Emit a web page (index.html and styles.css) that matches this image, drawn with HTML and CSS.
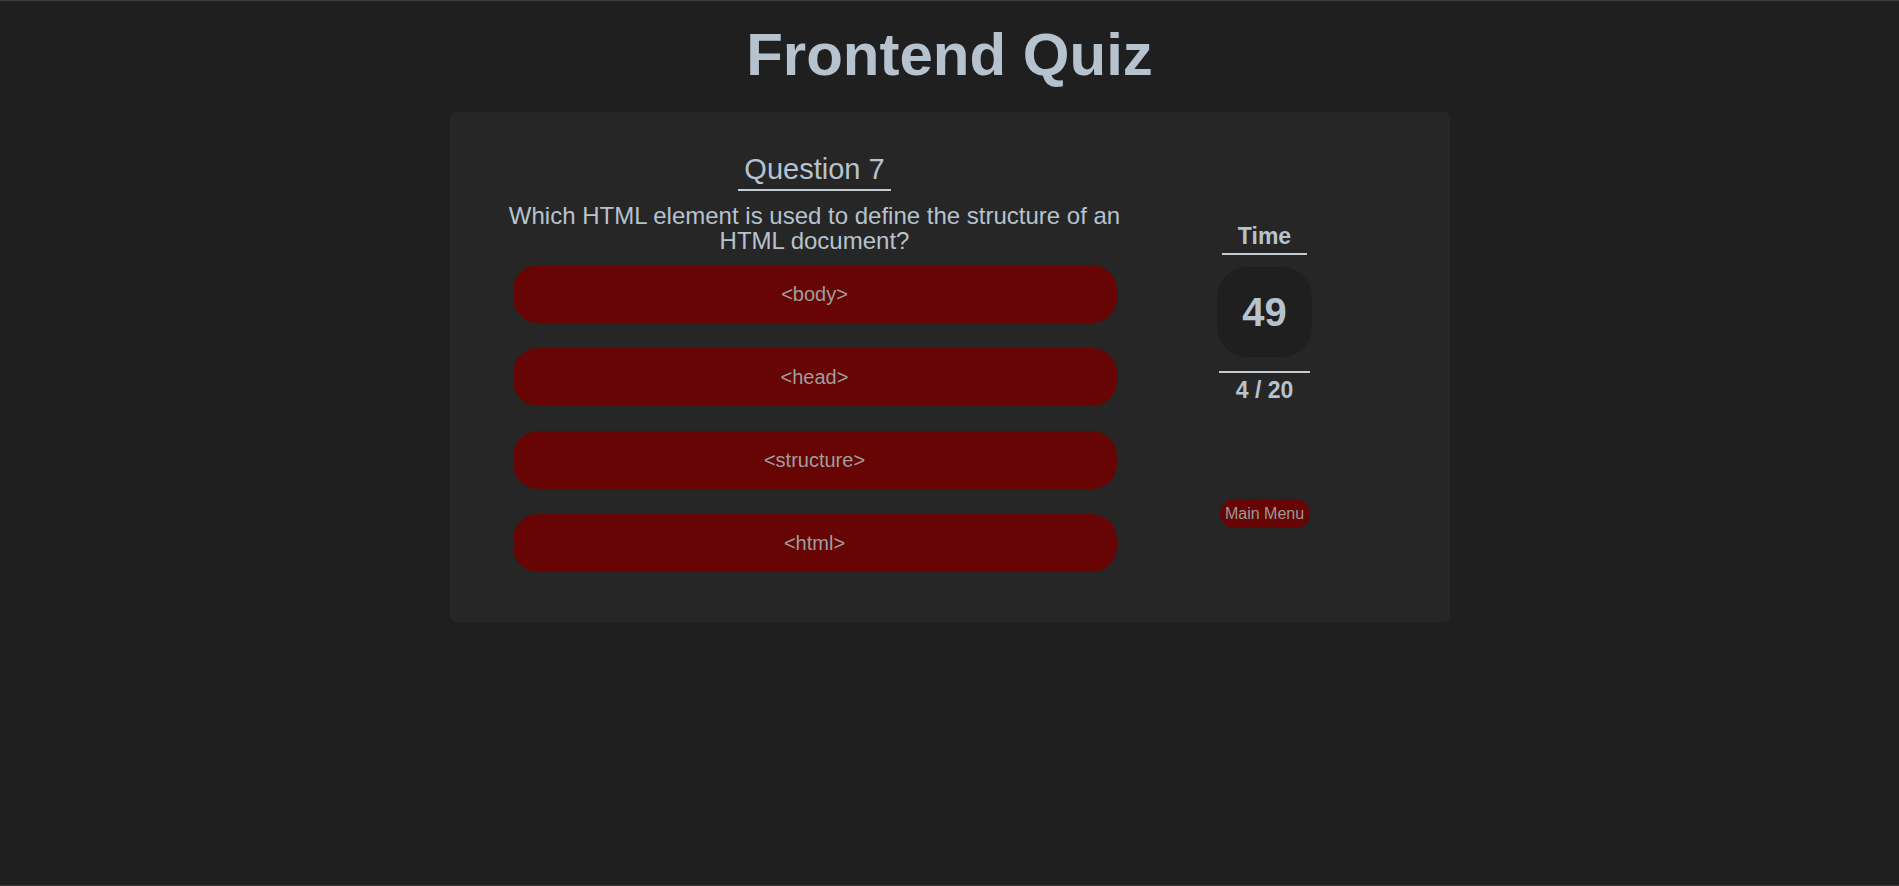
FILE: index.html
```html
<!DOCTYPE html>
<html lang="en">
<head>
<meta charset="utf-8">
<title>Frontend Quiz</title>
<link rel="stylesheet" href="styles.css">
</head>
<body>
  <h1 class="title">Frontend Quiz</h1>
  <main class="card">
    <section class="quiz">
      <h2 class="q-number">Question 7</h2>
      <p class="q-text">Which HTML element is used to define the structure of an HTML document?</p>
      <div class="options">
        <button class="option">&lt;body&gt;</button>
        <button class="option">&lt;head&gt;</button>
        <button class="option">&lt;structure&gt;</button>
        <button class="option">&lt;html&gt;</button>
      </div>
    </section>
    <aside class="side">
      <div class="time-label">Time</div>
      <div class="timer">49</div>
      <div class="progress">4 / 20</div>
      <button class="menu-btn">Main Menu</button>
    </aside>
  </main>
</body>
</html>
```
FILE: styles.css
```css
html {
  background: #1f1f1f;
}
body {
  margin: 0;
  border-top: 1px solid #3d3d3d;
  border-bottom: 1px solid #3a3a3a;
  min-height: 886px;
  box-sizing: border-box;
  font-family: "Liberation Sans", Arial, sans-serif;
  color: #b6c3ce;
}
.title {
  margin: 19px 0 22px;
  text-align: center;
  font-size: 60px;
  line-height: 70px;
  font-weight: bold;
  color: #b6c3ce;
}
.card {
  width: 1000px;
  margin: 0 auto;
  box-sizing: border-box;
  background: #272627;
  border-radius: 6px;
  padding: 40px 85px 50px 55px;
  display: flex;
  align-items: flex-start;
  gap: 40px;
}
.quiz {
  width: 620px;
  display: flex;
  flex-direction: column;
  align-items: center;
}
.q-number {
  margin: 0;
  font-size: 29px;
  line-height: 34px;
  font-weight: normal;
  padding: 0 6px 3px;
  border-bottom: 2px solid #c3cbd3;
  color: #b6c3ce;
}
.q-text {
  margin: 12px 0 0;
  font-size: 24px;
  line-height: 25px;
  text-align: center;
  color: #b6c3ce;
}
.options {
  width: 604px;
  margin-top: 12px;
  display: flex;
  flex-direction: column;
  gap: 25px;
}
.option {
  height: 58px;
  border: none;
  border-radius: 25px;
  background: #670505;
  color: #9e9e9e;
  font-family: "Liberation Sans", Arial, sans-serif;
  font-size: 20px;
  padding: 0;
}
.side {
  width: 200px;
  margin-top: 71px;
  display: flex;
  flex-direction: column;
  align-items: center;
}
.time-label {
  width: 85px;
  text-align: center;
  font-size: 23px;
  line-height: 26px;
  font-weight: bold;
  padding-bottom: 4px;
  border-bottom: 2px solid #c3cbd3;
}
.timer {
  width: 95px;
  height: 90px;
  margin-top: 12px;
  border-radius: 30px;
  background: #1f1f1f;
  display: flex;
  align-items: center;
  justify-content: center;
  font-size: 40px;
  font-weight: bold;
}
.progress {
  width: 91px;
  margin-top: 14px;
  border-top: 2px solid #c3cbd3;
  padding-top: 4px;
  text-align: center;
  font-size: 23px;
  line-height: 26px;
  font-weight: bold;
}
.menu-btn {
  margin-top: 96px;
  width: 90px;
  height: 29px;
  border: none;
  border-radius: 15px;
  background: #670505;
  color: #9a9a9a;
  font-family: "Liberation Sans", Arial, sans-serif;
  font-size: 16px;
  padding: 0;
  white-space: nowrap;
}
```
